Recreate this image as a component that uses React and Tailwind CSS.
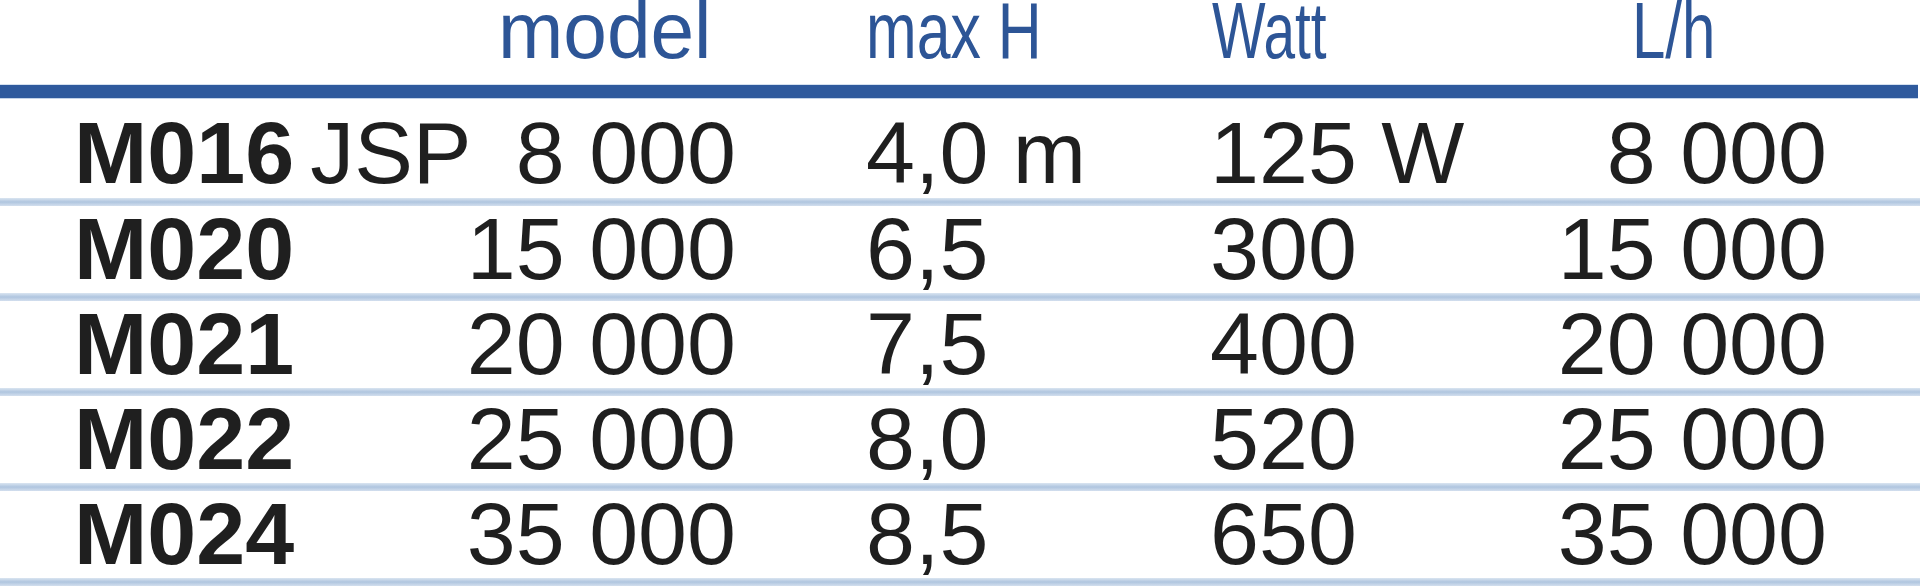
import React from "react";

const rows = [
  { code: "M016", extra: "JSP", model: "8 000", h: "4,0 m", w: "125 W", lh: "8 000" },
  { code: "M020", model: "15 000", h: "6,5", w: "300", lh: "15 000" },
  { code: "M021", model: "20 000", h: "7,5", w: "400", lh: "20 000" },
  { code: "M022", model: "25 000", h: "8,0", w: "520", lh: "25 000" },
  { code: "M024", model: "35 000", h: "8,5", w: "650", lh: "35 000" },
];

function Sep() {
  return <div className="h-[8px] w-full bg-linear-to-b from-[#dae5f1] via-[#afc5df] to-[#d3dfee]" />;
}

function Row({ r, first }) {
  return (
    <div
      className={
        "flex items-start pl-[74px] pr-[93px] text-[88px] leading-[85px] text-[#1f1f1f] " +
        (first ? "h-[100px] pt-[12px]" : "h-[87px]")
      }
    >
      <div className="w-[662px] flex justify-between whitespace-pre">
        <span>
          <span className="font-bold">{r.code}</span>
          {r.extra ? <span className="ml-[16px]">{r.extra}</span> : null}
        </span>
        <span>{r.model}</span>
      </div>
      <div className="ml-[130px] w-[344px] whitespace-pre">{r.h}</div>
      <div className="flex-1 flex justify-between whitespace-pre">
        <span>{r.w}</span>
        <span>{r.lh}</span>
      </div>
    </div>
  );
}

export default function App() {
  return (
    <div className="w-[1920px] h-[587px] overflow-hidden bg-white font-['Liberation_Sans',Arial,sans-serif]">
      <div className="h-[85px] flex items-start text-[80px] leading-[62px] text-[#2d5596] whitespace-pre">
        <div className="w-[498px]" />
        <div className="w-[368px]">
          <span className="inline-block origin-left scale-x-[0.98]">model</span>
        </div>
        <div className="w-[346px]">
          <span className="inline-block origin-left scale-x-[0.76]">max H</span>
        </div>
        <div className="w-[420px]">
          <span className="inline-block origin-left scale-x-[0.71]">Watt</span>
        </div>
        <div>
          <span className="inline-block origin-left scale-x-[0.75]">L/h</span>
        </div>
      </div>
      <div className="h-[13px] mr-[2px] bg-[#2f5a9d] shadow-[0_1px_0_#c3d3e8,0_-1px_0_#d5e1ef]" />
      {rows.map((r, i) => (
        <React.Fragment key={r.code}>
          <Row r={r} first={i === 0} />
          <Sep />
        </React.Fragment>
      ))}
    </div>
  );
}
